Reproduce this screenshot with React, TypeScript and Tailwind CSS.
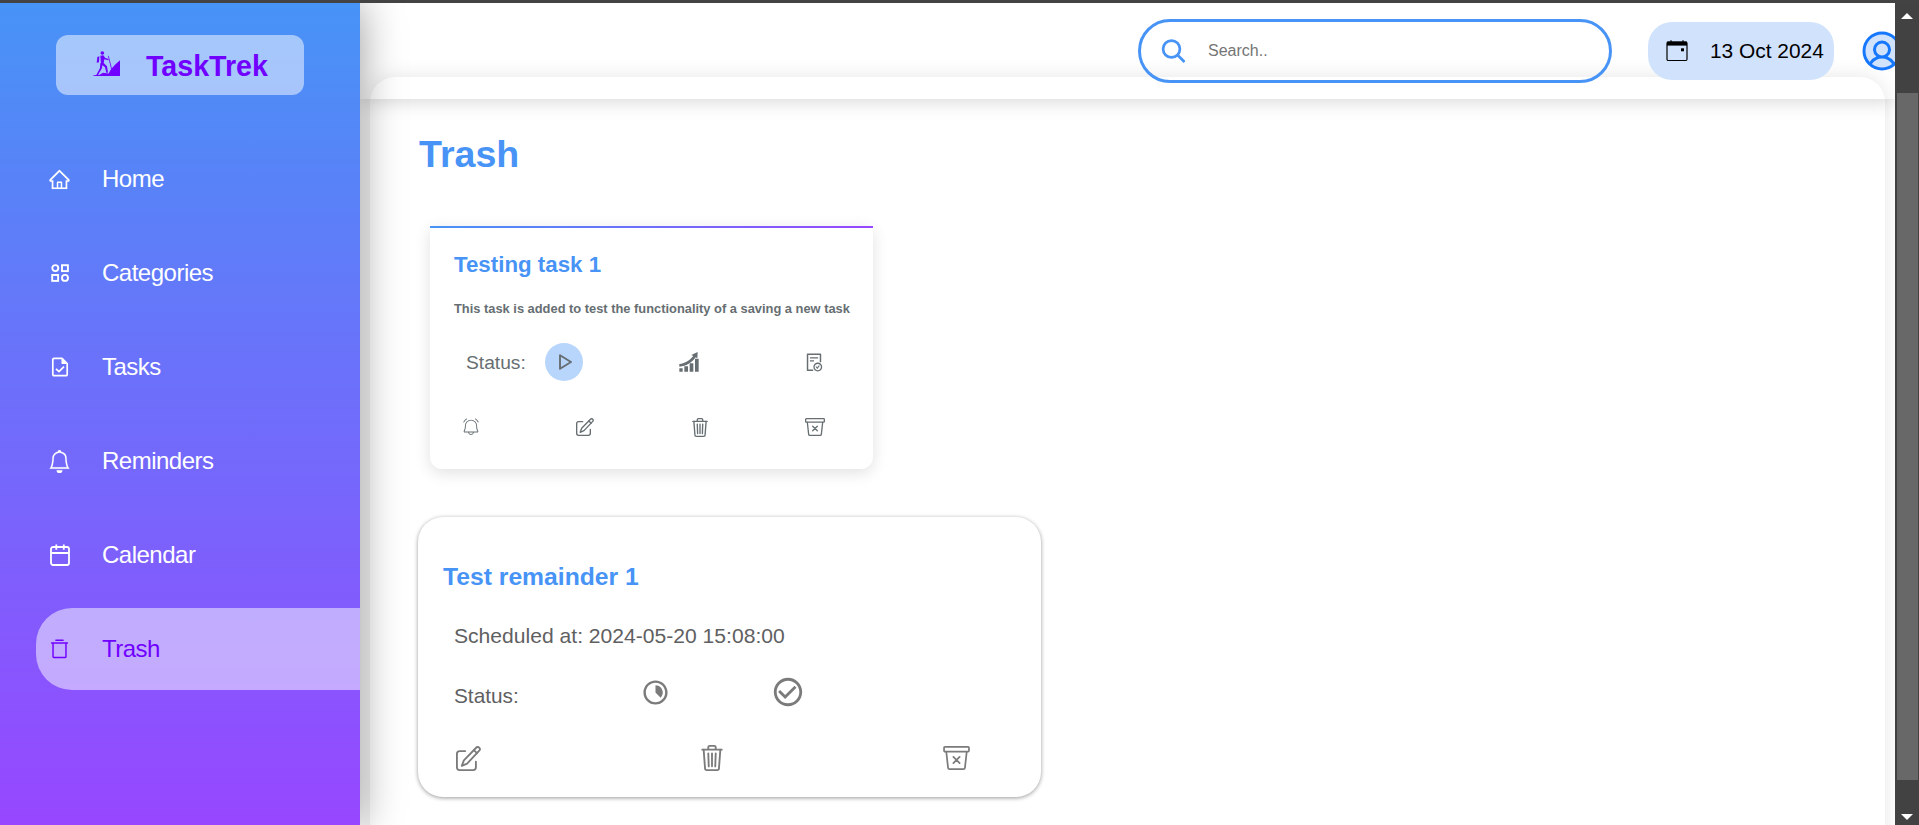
import type { ReactNode } from "react";
import { AiOutlineFileDone, AiOutlineHome } from "react-icons/ai";
import { BsBell } from "react-icons/bs";
import { MdCheckCircleOutline } from "react-icons/md";
import { PiBellRingingLight, PiTrashSimple, PiUserCircle } from "react-icons/pi";
import { RiProgress3Line } from "react-icons/ri";

function HikerLogo() {
  return (
    <svg viewBox="0 0 81 75" className="h-[25px] w-[27px] shrink-0" fill="currentColor">
      <circle cx="28" cy="6" r="5.5" />
      <path d="M13 18l6-2-1 18-7 1z" />
      <path d="M22 14l9-1 6 8 10 3-1 4-12-3-2 11 10 10 3 19h-5l-4-16-12-10z" />
      <path d="M22 36l7 4-3 13-11 19h-5l11-21z" />
      <path d="M45 15l2-1 10 40-2 2z" />
      <path d="M0 75l2-2.500 18-1 10-6 17 2 5-10 6-7 8-9 15-14v47.500z" />
    </svg>
  );
}

function CategoryIcon() {
  return (
    <svg viewBox="0 0 18 18" className="h-[18px] w-[18px]" fill="none" stroke="currentColor" strokeWidth="1.9">
      <circle cx="4.3" cy="4.1" r="3" />
      <rect x="11" y="1.2" width="5.9" height="5.9" />
      <rect x="1.2" y="11" width="5.9" height="5.9" />
      <circle cx="14" cy="13.9" r="3" />
    </svg>
  );
}

function TaskFileIcon() {
  return (
    <svg viewBox="0 0 18 20" className="h-[20px] w-[18px]" fill="none" stroke="currentColor" strokeWidth="1.7">
      <path d="M11 1.3H3a1.2 1.2 0 0 0-1.2 1.2v15A1.2 1.2 0 0 0 3 18.7h12a1.2 1.2 0 0 0 1.2-1.2V6.5z" strokeLinejoin="round" />
      <path d="M10.5 1v6H16z" fill="currentColor" stroke="none" />
      <path d="M5 11.8l3 2.8 5-5" />
    </svg>
  );
}

function NavCalendarIcon() {
  return (
    <svg viewBox="0 0 20 22" className="h-[22px] w-[20px]" fill="none" stroke="currentColor" strokeWidth="1.8">
      <rect x="1" y="3" width="18" height="18" rx="2" />
      <path d="M1 9h18M6.3 .4v5.4M13.8 .4v5.4" />
    </svg>
  );
}

function SearchIcon() {
  return (
    <svg viewBox="0 0 24 24" className="h-6 w-6 shrink-0" fill="none" stroke="currentColor" strokeWidth="2.7">
      <circle cx="10.5" cy="10" r="8.4" />
      <path d="M16.5 16l7 7" />
    </svg>
  );
}

function DateIcon() {
  return (
    <svg viewBox="0 0 22 22" className="h-[22px] w-[22px]" fill="none" stroke="currentColor">
      <rect x="1" y="2" width="20" height="18.5" rx="1.2" strokeWidth="1.2" />
      <path d="M1 1.6h20v4H1z" fill="currentColor" stroke="none" />
      <path d="M5 .3v3M17 .3v3" strokeWidth="1.2" />
      <path d="M15 8.3h3v3h-3z" fill="currentColor" stroke="none" />
    </svg>
  );
}

function PlayIcon() {
  return (
    <svg viewBox="0 0 13 16" className="ml-0.5 h-4 w-[13px]" fill="none" stroke="currentColor" strokeWidth="1.9" strokeLinejoin="round">
      <path d="M1 1.2l11 6.8-11 6.8z" />
    </svg>
  );
}

function GrowthIcon() {
  return (
    <svg viewBox="0 0 60 60" className="h-[20px] w-[20px] shrink-0" fill="currentColor">
      <path d="M1 49h10v10H1zM16 43h11v16H16zM32 34h11v25H32zM48 20h11v39H48z" />
      <path d="M1 36C20 34 32 25 43 12l-6-3L56 0l-1 19-5-3C38 32 22 43 1 44z" />
    </svg>
  );
}

function EditIcon({ className }: { className: string }) {
  return (
    <svg viewBox="0 0 54 54" className={className} fill="none" stroke="currentColor" strokeWidth="4" strokeLinecap="round" strokeLinejoin="round">
      <path d="M20 11H8a6 6 0 0 0-6 6v29a6 6 0 0 0 6 6h29a6 6 0 0 0 6-6V34" />
      <path d="M43.500 3.800a4.600 4.600 0 0 1 6.700 6.400L24 38l-11.500 5L17 31z" />
      <path d="M38.500 9l6.800 6.500" />
    </svg>
  );
}

function BinIcon({ className }: { className: string }) {
  return (
    <svg viewBox="0 0 46 56" className={className} fill="none" stroke="currentColor" strokeWidth="4" strokeLinecap="round" strokeLinejoin="round">
      <path d="M2 10h42M15 9V5a3 3 0 0 1 3-3h10a3 3 0 0 1 3 3v4" />
      <path d="M5 10l3 40a4 4 0 0 0 4 4h22a4 4 0 0 0 4-4l3-40" />
      <path d="M15 18l1 28M23 18v28M31 18l-1 28" />
    </svg>
  );
}

function BoxXIcon({ className }: { className: string }) {
  return (
    <svg viewBox="0 0 60 54" className={className} fill="none" stroke="currentColor" strokeWidth="3.9" strokeLinecap="round" strokeLinejoin="round">
      <rect x="2" y="2" width="56" height="10.500" rx="2" />
      <path d="M7 13l4 36a3.500 3.500 0 0 0 3.500 3h31a3.500 3.500 0 0 0 3.500-3l4-36" />
      <path d="M23 24.500l14 14M37 24.500l-14 14" />
    </svg>
  );
}

const navItems: { label: string; icon: ReactNode; active?: boolean }[] = [
  { label: "Home", icon: <AiOutlineHome size={23} stroke="currentColor" strokeWidth={4} /> },
  { label: "Categories", icon: <CategoryIcon /> },
  { label: "Tasks", icon: <TaskFileIcon /> },
  { label: "Reminders", icon: <BsBell size={23} stroke="currentColor" strokeWidth={0.1} /> },
  { label: "Calendar", icon: <NavCalendarIcon /> },
  { label: "Trash", icon: <PiTrashSimple size={23} />, active: true },
];

function Sidebar() {
  return (
    <aside className="relative z-20 flex h-full w-[360px] shrink-0 flex-col bg-linear-to-b/srgb from-[#4793f6] to-[#9747ff] pt-8 shadow-[0_0_40px_rgba(0,0,0,0.4)]">
      <div className="ml-14 flex h-[60px] w-[248px] items-center rounded-xl bg-white/50 pl-[37px] text-[#7000ff]">
        <div className="-mt-1">
          <HikerLogo />
        </div>
        <span className="ml-[26px] pt-0.5 text-[28.6px] font-bold">TaskTrek</span>
      </div>
      <nav className="mt-[43px] flex flex-col gap-3 pl-9">
        {navItems.map((item) => (
          <a
            key={item.label}
            className={
              item.active
                ? "flex h-[82px] items-center rounded-l-[36px] bg-white/50 text-[#7000ff]"
                : "flex h-[82px] items-center text-white"
            }
          >
            <span className="flex w-[47px] justify-center">{item.icon}</span>
            <span className="ml-[19px] text-2xl tracking-[-0.5px]">{item.label}</span>
          </a>
        ))}
      </nav>
    </aside>
  );
}

function Header() {
  return (
    <header className="flex h-24 shrink-0 items-start bg-white pl-[778px] shadow-[0_0_20px_rgba(0,0,0,0.2)]">
      <div className="relative z-10 mt-4 flex h-16 w-[474px] shrink-0 items-center rounded-full border-3 border-[#4793f6] pl-5 text-[#4793f6]">
        <SearchIcon />
        <input
          placeholder="Search.."
          className="ml-[23px] w-80 bg-transparent text-base outline-none placeholder:text-[#757575]"
        />
      </div>
      <div className="relative z-10 mt-[19px] ml-9 flex h-[58px] w-[186px] shrink-0 items-center rounded-3xl bg-[#d1e3fc] pl-[18px] text-black">
        <DateIcon />
        <span className="ml-[22px] text-[20.9px] whitespace-nowrap">13 Oct 2024</span>
      </div>
      <div className="mt-[24px] ml-[24px] flex h-12 w-12 shrink-0 items-center justify-center">
        <span className="flex h-9 w-9 items-center justify-center rounded-full bg-[#d1e3fc]">
          <PiUserCircle size={48} className="shrink-0 text-[#1677ff]" />
        </span>
      </div>
    </header>
  );
}

function TaskCard() {
  return (
    <section className="ml-[60px] flex h-[243px] w-[443px] flex-col overflow-clip rounded-b-xl bg-white text-[#666e72] shadow-[0_4px_16px_rgba(0,0,0,0.12)]">
      <div className="h-0.5 shrink-0 bg-linear-to-r/srgb from-[#4793f6] to-[#9747ff]" />
      <h2 className="mt-[21px] ml-6 text-[22.3px] leading-8 font-bold text-[#4793f6]">Testing task 1</h2>
      <p className="mt-[18px] ml-6 text-[12.86px] leading-5 font-bold whitespace-nowrap">
        This task is added to test the functionality of a saving a new task
      </p>
      <div className="mt-6 flex h-[38px] items-center">
        <span className="ml-9 w-[79px] pt-[3px] text-[19.2px]">Status:</span>
        <span className="flex h-[38px] w-[38px] items-center justify-center rounded-full bg-[#b8d6fb]">
          <PlayIcon />
        </span>
        <span className="ml-[96px]">
          <GrowthIcon />
        </span>
        <AiOutlineFileDone size={21} className="ml-[105px]" />
      </div>
      <div className="mt-[35px] flex h-[22px] items-center pl-[31px]">
        <PiBellRingingLight size={20} />
        <EditIcon className="ml-[95px] h-[18px] w-[18px]" />
        <BinIcon className="ml-[98px] h-[19px] w-[16px]" />
        <BoxXIcon className="ml-[97px] h-[18px] w-[20px]" />
      </div>
    </section>
  );
}

function ReminderCard() {
  return (
    <section className="mt-12 ml-12 flex h-[280px] w-[623px] flex-col rounded-[25px] bg-white text-[#5f6062] shadow-[0_1px_4px_rgba(0,0,0,0.4)]">
      <h2 className="mt-11 ml-[25px] text-[24.7px] leading-8 font-bold text-[#4793f6]">Test remainder 1</h2>
      <p className="mt-[27px] ml-9 text-[21.1px] leading-8">Scheduled at: 2024-05-20 15:08:00</p>
      <div className="mt-6 flex h-8 items-center text-[#7b7b7b]">
        <span className="ml-9 w-[187px] pt-2 text-[20.8px] text-[#5f6062]">Status:</span>
        <RiProgress3Line size={29} />
        <MdCheckCircleOutline size={34} className="ml-[101px]" />
      </div>
      <div className="mt-[36px] flex h-7 items-center justify-between pr-[71px] pl-[38px] text-[#7b7b7b]">
        <EditIcon className="h-[25px] w-[25px]" />
        <BinIcon className="h-[26px] w-[22px]" />
        <BoxXIcon className="h-[24px] w-[27px]" />
      </div>
    </section>
  );
}

function Scrollbar() {
  return (
    <div className="relative z-30 flex w-6 shrink-0 flex-col items-center bg-[#424242]">
      <svg viewBox="0 0 12 6" className="mt-2.5 h-1.5 w-3 fill-white">
        <path d="M0 6L6 0l6 6z" />
      </svg>
      <div className="mt-[74px] h-[687px] w-[21px] bg-[#686868]" />
      <svg viewBox="0 0 12 6" className="mt-[34px] h-1.5 w-3 fill-white">
        <path d="M0 0l6 6 6-6z" />
      </svg>
    </div>
  );
}

export default function App() {
  return (
    <div className="flex h-[825px] w-[1919px] flex-col overflow-hidden bg-white font-['Liberation_Sans',Arial,sans-serif]">
      <div className="z-30 h-[3px] shrink-0 bg-[#434343]" />
      <div className="flex min-h-0 flex-1">
        <Sidebar />
        <div className="flex min-w-0 flex-1 flex-col overflow-hidden">
          <Header />
          <main className="-mt-[22px] mr-2.5 ml-2.5 h-[900px] shrink-0 rounded-t-[25px] shadow-[0_0_20px_rgba(0,0,0,0.1)]">
            <h1 className="pt-[54px] pl-[49px] text-[37.6px] leading-[46px] font-bold text-[#4793f6]">Trash</h1>
            <div className="mt-[49px]">
              <TaskCard />
            </div>
            <ReminderCard />
          </main>
        </div>
        <Scrollbar />
      </div>
    </div>
  );
}
